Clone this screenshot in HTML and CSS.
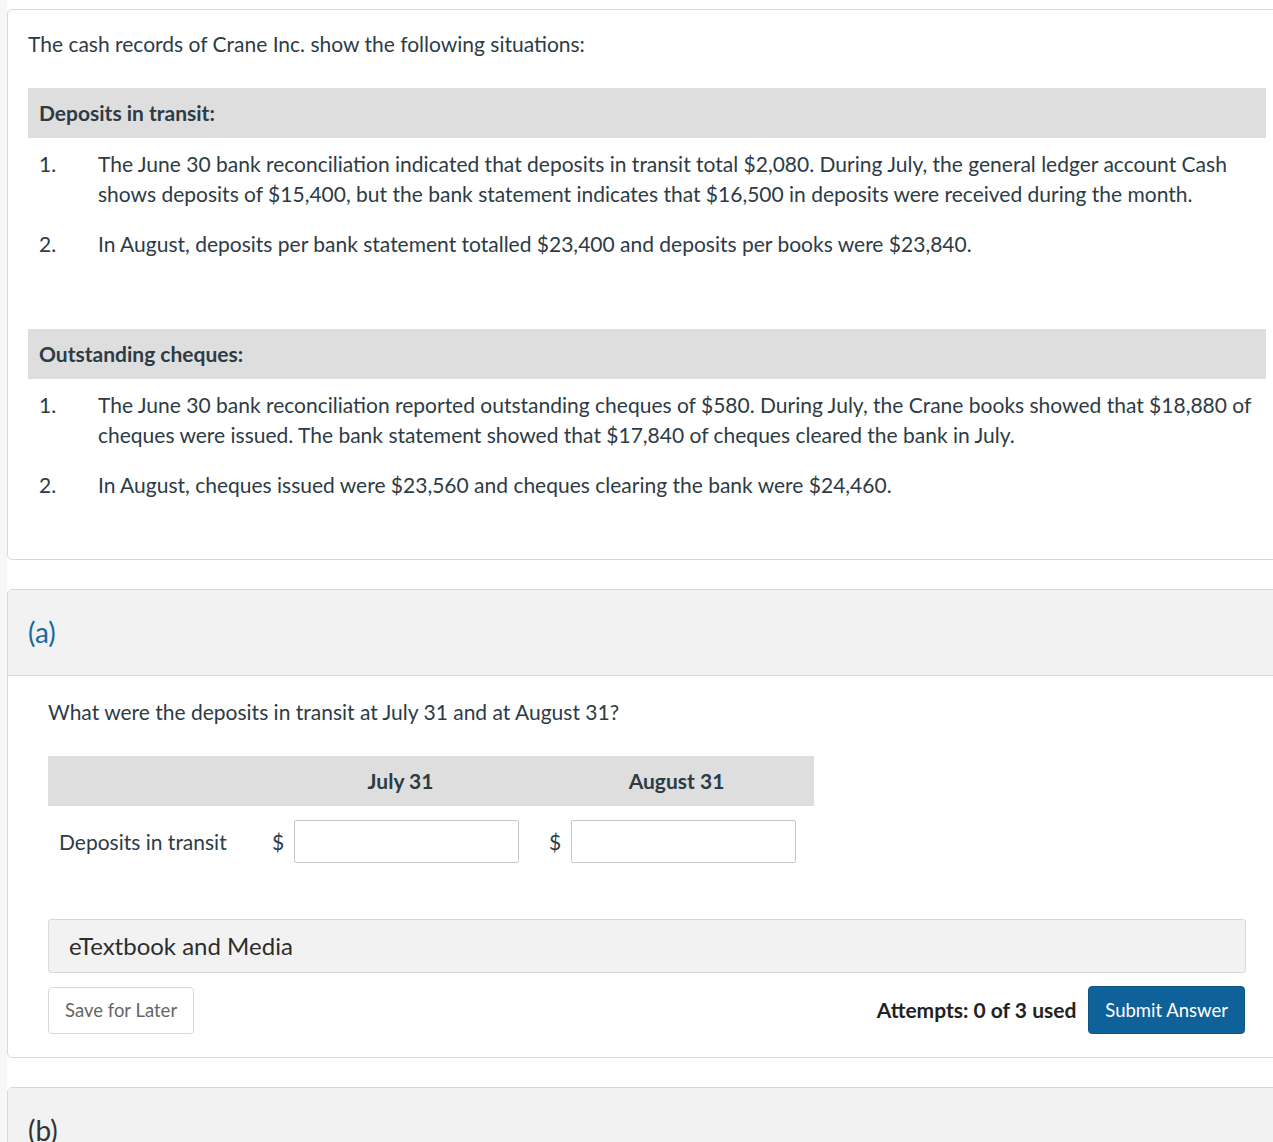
FILE: index.html
```html
<!DOCTYPE html>
<html>
<head>
  <meta charset="UTF-8">
  <title>Bank Reconciliation</title>
  <link rel="stylesheet" href="styles.css">
</head>
<body>
  <div class="page">
    <div class="card question">
      <p class="intro">The cash records of Crane Inc. show the following situations:</p>

      <div class="group">
        <div class="group-title">Deposits in transit:</div>
        <ol class="items">
          <li><span class="num">1.</span><span>The June 30 bank reconciliation indicated that deposits in transit total $2,080. During July, the general ledger account Cash shows deposits of $15,400, but the bank statement indicates that $16,500 in deposits were received during the month.</span></li>
          <li><span class="num">2.</span><span>In August, deposits per bank statement totalled $23,400 and deposits per books were $23,840.</span></li>
        </ol>
      </div>

      <div class="group">
        <div class="group-title">Outstanding cheques:</div>
        <ol class="items">
          <li><span class="num">1.</span><span>The June 30 bank reconciliation reported outstanding cheques of $580. During July, the Crane books showed that $18,880 of cheques were issued. The bank statement showed that $17,840 of cheques cleared the bank in July.</span></li>
          <li><span class="num">2.</span><span>In August, cheques issued were $23,560 and cheques clearing the bank were $24,460.</span></li>
        </ol>
      </div>
    </div>

    <div class="card part">
      <div class="part-head active">(a)</div>
      <div class="part-body">
        <p class="prompt">What were the deposits in transit at July 31 and at August 31?</p>

        <div class="answer-table">
          <div class="th"></div>
          <div class="th">July 31</div>
          <div class="th">August 31</div>

          <div class="td label">Deposits in transit</div>
          <div class="td"><span class="cur">$</span><input type="text"></div>
          <div class="td"><span class="cur">$</span><input type="text"></div>
        </div>

        <div class="media">eTextbook and Media</div>

        <div class="actions">
          <button class="btn-save">Save for Later</button>
          <div class="right">
            <span class="attempts">Attempts: 0 of 3 used</span>
            <button class="btn-submit">Submit Answer</button>
          </div>
        </div>
      </div>
    </div>

    <div class="card part">
      <div class="part-head">(b)</div>
      <div class="part-body tall"></div>
    </div>
  </div>
</body>
</html>
```

FILE: styles.css
```css
html {
  overflow: hidden;
}

body {
  margin: 0;
  background: #f7f7f7;
  font-family: Lato, "Liberation Sans", sans-serif;
  color: #2d3b45;
  font-size: 21px;
  line-height: 30px;
}

.page {
  margin-left: 7px;
  width: 1280px;
  padding-top: 9px;
  background: white;
}

.card {
  border: 1px solid #d9d9d9;
  border-radius: 5px;
  background: white;
}

.question {
  padding: 19px 20px 59px;
}

.intro {
  margin: 0;
}

.group {
  margin-top: 29px;
}

.group + .group {
  margin-top: 70px;
}

.group-title {
  background: #dedede;
  padding: 10px 11px;
  font-weight: 700;
}

.items {
  list-style: none;
  margin: 11px 0 0;
  padding: 0;
}

.items li {
  display: flex;
  padding-left: 11px;
}

.items li + li {
  margin-top: 20px;
}

.num {
  flex: 0 0 59px;
}

.part {
  margin-top: 29px;
  overflow: hidden;
}

.part-head {
  background: #f2f2f2;
  border-bottom: 1px solid #d9d9d9;
  padding: 24px 20px 25px;
  font-size: 28px;
  line-height: 36px;
  color: #333;
}

.part-head.active {
  color: #1a6aa0;
}

.part-body {
  padding: 21px 40px 23px;
}

.part-body.tall {
  height: 200px;
}

.prompt {
  margin: 0 0 29px;
}

.answer-table {
  display: grid;
  grid-template-columns: 214px 277px 275px;
  margin-bottom: 42px;
}

.th {
  background: #dedede;
  padding: 10px 0;
  font-weight: 700;
  text-align: center;
}

.td {
  display: flex;
  align-items: center;
  padding: 14px 0 14px 10px;
}

.td.label {
  padding-left: 11px;
}

.cur {
  width: 12px;
  margin-right: 10px;
  text-align: center;
}

.td input {
  width: 225px;
  height: 43px;
  box-sizing: border-box;
  border: 1px solid #c8c8c8;
  border-radius: 2px;
  font-family: inherit;
  font-size: 18px;
}

.media {
  background: #f2f2f2;
  border: 1px solid #d9d9d9;
  border-radius: 3px;
  padding: 11px 20px;
  font-size: 24px;
  color: #2d2d2d;
}

.actions {
  display: flex;
  align-items: center;
  justify-content: space-between;
  margin-top: 13px;
  width: 1197px;
}

.right {
  display: flex;
  align-items: center;
  gap: 12px;
}

.attempts {
  font-weight: 700;
  color: #222;
}

.btn-save,
.btn-submit {
  height: 48px;
  padding: 0 16px;
  border-radius: 4px;
  font-family: inherit;
  font-size: 18.5px;
}

.btn-save {
  background: white;
  border: 1px solid #d9d9d9;
  color: #666;
  height: 47px;
}

.btn-submit {
  background: #0f6299;
  border: 1px solid #0c5585;
  color: white;
}
```
